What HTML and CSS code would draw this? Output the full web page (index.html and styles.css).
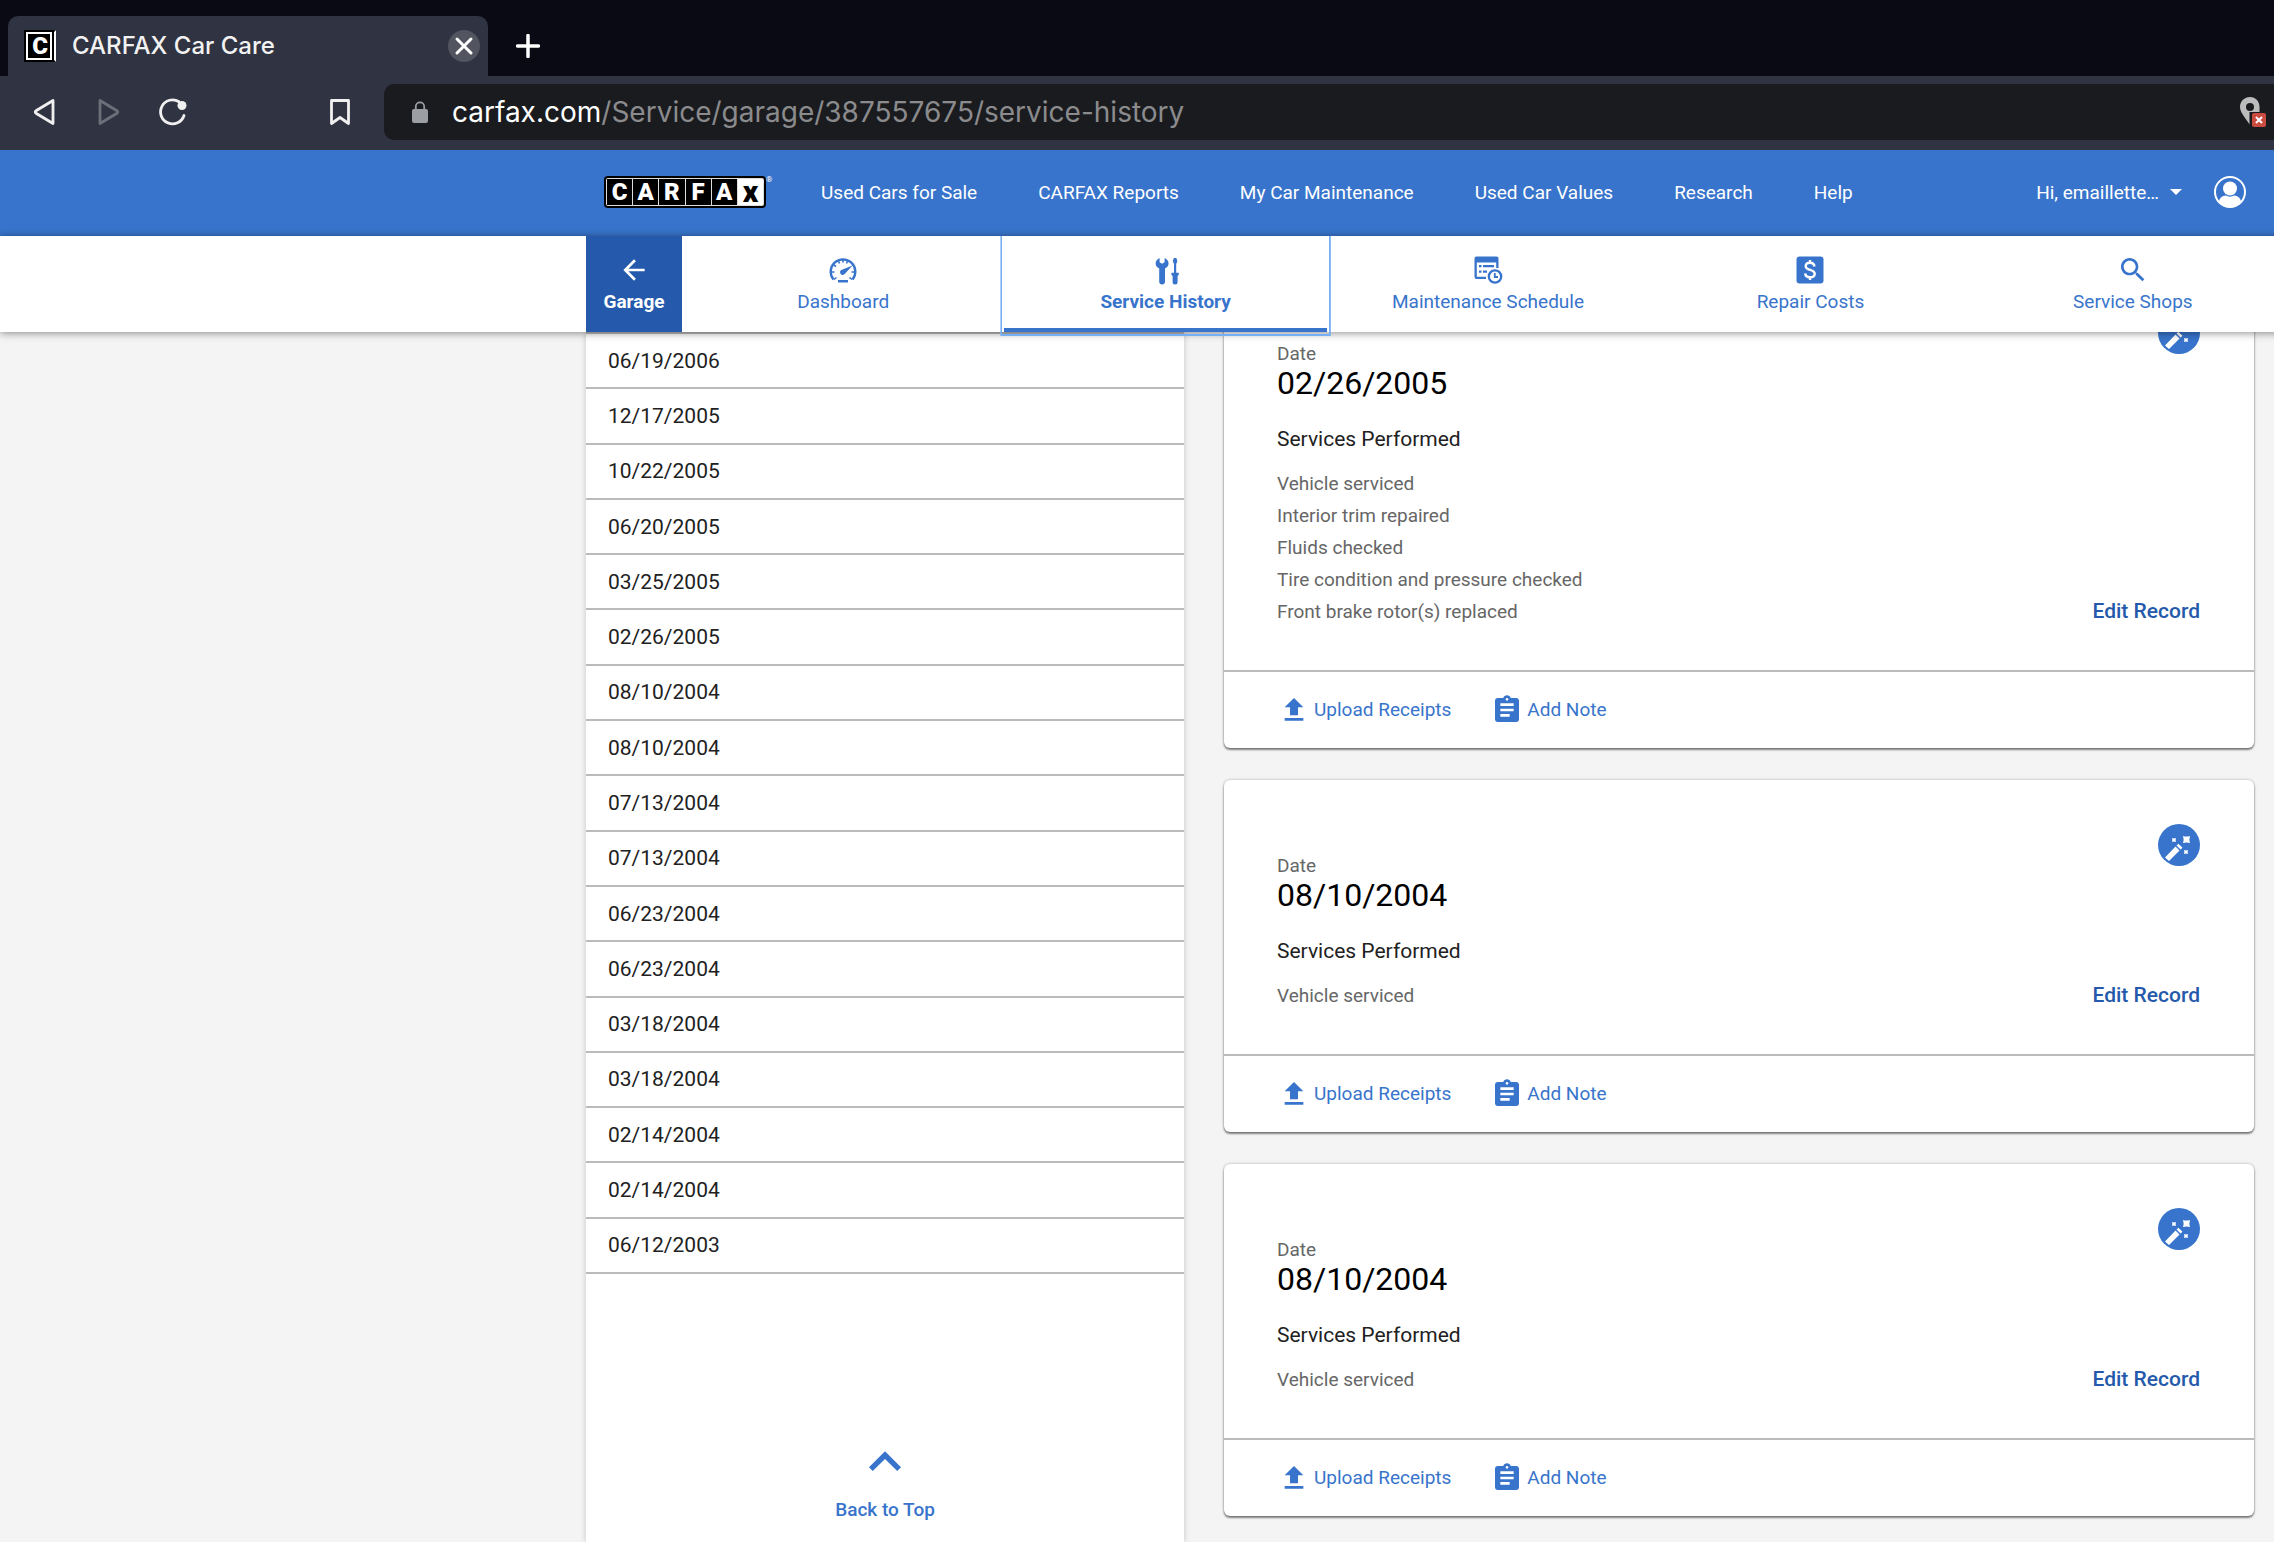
FILE: index.html
```html
<!DOCTYPE html>
<html lang="en">
<head>
<meta charset="utf-8">
<title>CARFAX Car Care</title>
<link rel="stylesheet" href="styles.css">
</head>
<body>
<svg class="sprite" aria-hidden="true">
  <symbol id="upload" viewBox="0 0 24 24"><path d="M9 16h6v-6h4l-7-7-7 7h4zm-4 2h14v2H5z"/></symbol>
  <symbol id="note" viewBox="0 0 24 24"><path d="M19 3h-4.180C14.400 1.840 13.300 1 12 1c-1.300 0-2.400.84-2.820 2H5c-1.100 0-2 .9-2 2v14c0 1.100.9 2 2 2h14c1.100 0 2-.9 2-2V5c0-1.100-.9-2-2-2zm-7 0c.55 0 1 .45 1 1s-.45 1-1 1-1-.45-1-1 .45-1 1-1zm2 14H7v-2h7v2zm3-4H7v-2h10v2zm0-4H7V7h10v2z"/></symbol>
  <symbol id="wand" viewBox="0 0 42 42">
    <circle cx="21" cy="21" r="21" fill="#3874cb"/>
    <path fill="#fff" d="M7 33.500 17.500 22.500 21.500 26.500 11 37zM18.500 21.500 20.300 19.700 24.500 23.800 22.600 25.500z"/>
    <path fill="#fff" d="M25 12q3.500 1.200 7 0q-1.200 3.500 0 7q-3.500-1.200-7 0q1.200-3.500 0-7zM14 14q2 .8 4 0q-.8 2 0 4q-2-.8-4 0q.8-2 0-4zM26 26q2 .8 4 0q-.8 2 0 4q-2-.8-4 0q.8-2 0-4z"/>
  </symbol>
</svg>

<div class="browser">
  <div class="tabstrip">
    <div class="tab">
      <span class="favicon">C</span>
      <span class="tab-title">CARFAX Car Care</span>
      <button class="tab-close" aria-label="Close tab"><svg viewBox="0 0 32 32" width="32" height="32"><path d="M9 9l14 14M23 9L9 23" stroke="#fff" stroke-width="3" stroke-linecap="round"/></svg></button>
    </div>
    <button class="tab-new" aria-label="New tab"><svg viewBox="0 0 24 24" width="24" height="24"><path d="M12 1.500v21M1.500 12h21" stroke="#fff" stroke-width="3.500" stroke-linecap="round"/></svg></button>
  </div>
  <div class="toolbar">
    <div class="tools">
      <button aria-label="Back"><svg viewBox="0 0 28 28" width="28" height="28" fill="none" stroke="#f0f0f0" stroke-width="2.800" stroke-linejoin="round"><path d="M22 2.500v23L5 15.200q-1.500-1.200 0-2.400z"/></svg></button>
      <button aria-label="Forward"><svg viewBox="0 0 28 28" width="28" height="28" fill="none" stroke="#6d6f78" stroke-width="2.800" stroke-linejoin="round"><path d="M5 2.500v23L22 15.200q1.500-1.200 0-2.400z"/></svg></button>
      <button aria-label="Reload"><svg viewBox="0 0 28 28" width="28" height="28"><path d="M25 17.500A12 12 0 1 1 20 3.700" fill="none" stroke="#f0f0f0" stroke-width="2.800" stroke-linecap="round"/><circle cx="23" cy="7.500" r="4.500" fill="#f0f0f0"/></svg></button>
      <button class="bookmark" aria-label="Bookmark"><svg viewBox="0 0 28 28" width="28" height="28" fill="none" stroke="#f0f0f0" stroke-width="2.800" stroke-linejoin="round"><path d="M5.500 2.500h17v23L14 19.500l-8.500 6z"/></svg></button>
    </div>
    <div class="address">
      <svg class="lock" viewBox="0 0 16 22" width="16" height="22"><rect y="8" width="16" height="14" rx="2" fill="#9b9ea3"/><path d="M3.800 9V5.500a4.200 4.200 0 0 1 8.400 0V9" fill="none" stroke="#9b9ea3" stroke-width="1.800"/></svg>
      <span class="url"><b>carfax.com</b>/Service/garage/387557675/service-history</span>
      <svg class="pin" viewBox="0 0 26 30" width="26" height="30"><path fill="#bcbcbc" fill-rule="evenodd" d="M10 0C4.500 0 0 4.300 0 9.800 0 16 5 20 9.500 27.500V15h10V9.800C19.500 4.300 15.500 0 10 0zm0 6a4 4 0 1 1 0 8 4 4 0 0 1 0-8z"/><rect x="12" y="16" width="14" height="14" rx="2" fill="#cb4b41"/><path d="M16 20l6 6M22 20l-6 6" stroke="#fff" stroke-width="2"/></svg>
    </div>
  </div>
</div>

<header class="site-header">
  <a class="logo" href="#" aria-label="CARFAX"><span class="plate"><i>C</i><i>A</i><i>R</i><i>F</i><i>A</i><i class="x">x</i></span><sup>®</sup></a>
  <nav class="site-nav">
    <a href="#">Used Cars for Sale</a><a href="#">CARFAX Reports</a><a href="#">My Car Maintenance</a><a href="#">Used Car Values</a><a href="#">Research</a><a href="#">Help</a>
  </nav>
  <button class="account"><span>Hi, emaillette…</span>
    <svg viewBox="0 0 12 6" width="12" height="6"><path d="M0 0h12L6 6z" fill="#fff"/></svg>
    <svg class="avatar" viewBox="0 0 32 32" width="32" height="32"><circle cx="16" cy="16" r="15" fill="none" stroke="#fff" stroke-width="2"/><circle cx="16" cy="12.500" r="7" fill="#fff"/><path d="M5 26c0-3.500 3-6.500 7-6.500 2 1.500 6 1.500 8 0 4 0 7 3 7 6.500A15 15 0 0 1 5 26z" fill="#fff"/></svg>
  </button>
</header>

<nav class="garage-nav">
  <a class="garage" href="#"><svg class="icon" viewBox="0 0 24 24"><path d="M20 11H7.830l5.590-5.590L12 4l-8 8 8 8 1.410-1.410L7.830 13H20z"/></svg>Garage</a>
  <a href="#"><svg class="icon" viewBox="0 0 32 32"><path d="M6.500 25.500A12.300 12.300 0 1 1 25.500 25.500" fill="none" stroke="currentColor" stroke-width="2.400"/><path d="M7 25.500l2.500-2M25 25.500l-2.500-2M4 18h3.500M28 18h-3.500M7 11l2 1.500M11.500 7l1 2.500M16 5.500v3M20.500 7l-1 2.500" stroke="currentColor" stroke-width="1.600"/><path d="M25.500 11.500l-7.600 8.300a2.700 2.700 0 1 1-3.600-3.900z"/><path d="M11 26h10v2.500H11z"/></svg>Dashboard</a>
  <a class="active" href="#"><svg class="icon" viewBox="0 0 32 32"><path d="M9.600 4v4.200l2.500 1.600 2.500-1.600V4C17 5.200 18.600 7 18.600 9.400c0 2.200-1.400 4-3.600 5v13.200a2.900 2.900 0 0 1-5.800 0V14.400c-2.200-1-3.600-2.800-3.600-5C5.600 7 7.200 5.200 9.600 4zM23.800 4h2.600l1 3.200-1.200 2.800v8.800h2.600v2l-1.200 1.200v6a2.500 2.500 0 0 1-5 0v-6l-1.200-1.200v-2H24V10l-1.200-2.800z"/></svg>Service History</a>
  <a href="#"><svg class="icon" viewBox="0 0 32 32"><path fill-rule="evenodd" d="M4.500 2.500h20a2 2 0 0 1 2 2V14h-2.300V8.500H4.800V22.700H14V25H4.500a2 2 0 0 1-2-2V4.500a2 2 0 0 1 2-2z"/><path d="M7 11h2.500v2.300H7zM11 11h11v2.300H11zM7 16.500h2.500v2.300H7zM11 16.500h4v2.300H11z"/><circle cx="23" cy="22.500" r="6.200" fill="none" stroke="currentColor" stroke-width="2.300"/><path d="M22.800 19v4h3.200" fill="none" stroke="currentColor" stroke-width="1.800"/></svg>Maintenance Schedule</a>
  <a href="#"><svg class="icon" viewBox="0 0 32 32"><rect x="2.500" y="2.500" width="27" height="27" rx="3"/><path d="M20.500 12.500c-.3-2.500-2-3.800-4.500-3.800s-4.300 1.300-4.300 3.500c0 4.800 9 2.500 9 7.600 0 2.200-1.900 3.500-4.600 3.500s-4.700-1.300-4.900-3.900M16 6v3M16 23v3" fill="none" stroke="#fff" stroke-width="2.400"/></svg>Repair Costs</a>
  <a href="#"><svg class="icon" viewBox="0 0 24 24"><path d="M15.500 14h-.79l-.28-.27C15.410 12.590 16 11.110 16 9.500 16 5.910 13.090 3 9.500 3S3 5.910 3 9.500 5.910 16 9.500 16c1.610 0 3.090-.59 4.230-1.570l.27.28v.79l5 4.990L20.490 19l-4.990-5zm-6 0C7.010 14 5 11.990 5 9.500S7.010 5 9.500 5 14 7.010 14 9.500 11.990 14 9.500 14z"/></svg>Service Shops</a>
</nav>

<main class="page">
  <aside class="history">
    <ul class="dates">
      <li>06/19/2006</li><li>12/17/2005</li><li>10/22/2005</li><li>06/20/2005</li><li>03/25/2005</li><li>02/26/2005</li><li>08/10/2004</li><li>08/10/2004</li><li>07/13/2004</li><li>07/13/2004</li><li>06/23/2004</li><li>06/23/2004</li><li>03/18/2004</li><li>03/18/2004</li><li>02/14/2004</li><li>02/14/2004</li><li>06/12/2003</li>
    </ul>
    <button class="to-top"><svg viewBox="0 0 24 24" width="64" height="64"><path d="M12 8l-6 6 1.410 1.410L12 10.830l4.590 4.580L18 14z"/></svg>Back to Top</button>
  </aside>

  <section class="records">
    <article class="card">
      <div class="card-body">
        <div class="details">
          <p class="label">Date</p>
          <h2>02/26/2005</h2>
          <h3>Services Performed</h3>
          <ul><li>Vehicle serviced</li><li>Interior trim repaired</li><li>Fluids checked</li><li>Tire condition and pressure checked</li><li>Front brake rotor(s) replaced</li></ul>
        </div>
        <div class="side"><svg width="42" height="42"><use href="#wand"/></svg><a href="#">Edit Record</a></div>
      </div>
      <footer><button><svg class="icon"><use href="#upload"/></svg>Upload Receipts</button><button><svg class="icon"><use href="#note"/></svg>Add Note</button></footer>
    </article>
    <article class="card">
      <div class="card-body">
        <div class="details">
          <p class="label">Date</p>
          <h2>08/10/2004</h2>
          <h3>Services Performed</h3>
          <ul><li>Vehicle serviced</li></ul>
        </div>
        <div class="side"><svg width="42" height="42"><use href="#wand"/></svg><a href="#">Edit Record</a></div>
      </div>
      <footer><button><svg class="icon"><use href="#upload"/></svg>Upload Receipts</button><button><svg class="icon"><use href="#note"/></svg>Add Note</button></footer>
    </article>
    <article class="card">
      <div class="card-body">
        <div class="details">
          <p class="label">Date</p>
          <h2>08/10/2004</h2>
          <h3>Services Performed</h3>
          <ul><li>Vehicle serviced</li></ul>
        </div>
        <div class="side"><svg width="42" height="42"><use href="#wand"/></svg><a href="#">Edit Record</a></div>
      </div>
      <footer><button><svg class="icon"><use href="#upload"/></svg>Upload Receipts</button><button><svg class="icon"><use href="#note"/></svg>Add Note</button></footer>
    </article>
  </section>
</main>
</body>
</html>
```

FILE: styles.css
```css
:root {
  --blue: #3874cb;
  --blue-dark: #2459ab;
  --line: #bbb;
  --gutter: 586px;
}

* { box-sizing: border-box; }

html { overflow-x: hidden; }

body {
  margin: 0;
  min-height: 100vh;
  display: flex;
  flex-direction: column;
  background: #f4f4f4;
  color: #212121;
  font-family: Roboto, "Liberation Sans", sans-serif;
  font-size: 19px;
  overflow-x: hidden;
}

button {
  padding: 0;
  border: 0;
  background: none;
  font: inherit;
  color: inherit;
  cursor: pointer;
}

a { color: inherit; text-decoration: none; }
ul { margin: 0; padding: 0; list-style: none; }
p, h2, h3 { margin: 0; font-weight: 400; }
svg { display: block; flex: none; }
.sprite { position: absolute; width: 0; height: 0; }
.icon { width: 32px; height: 32px; fill: currentColor; }

/* Browser window */
.browser { font-family: Inter, "Liberation Sans", sans-serif; background: #303341; }

.tabstrip {
  display: flex;
  align-items: center;
  height: 76px;
  padding: 16px 8px 0;
  background: #0a0a14;
}

.tab {
  display: flex;
  align-items: center;
  gap: 16px;
  width: 480px;
  height: 60px;
  padding: 0 8px 0 16px;
  border-radius: 10px 10px 0 0;
  background: #303341;
}

.favicon {
  width: 32px;
  height: 32px;
  border: 2px solid #000;
  border-right-color: #fff;
  background: #000;
  box-shadow: inset -2px 0 0 #000, inset 0 0 0 2px #fff, inset -4px 0 0 #fff;
  color: #fff;
  font: 900 24px/28px Roboto, sans-serif;
  text-align: center;
}

.tab-title { flex: 1; color: #f2f2f2; font-size: 24px; line-height: 28px; font-weight: 500; }
.tab-close { border-radius: 50%; background: #52545f; }
.tab-new { margin-left: 28px; }

.toolbar { display: flex; height: 74px; padding: 8px 0 10px 31px; }
.tools { display: flex; align-items: center; gap: 36px; width: 353px; }
.bookmark { margin-left: auto; margin-right: 30px; }

.address {
  flex: 1;
  display: flex;
  align-items: center;
  gap: 24px;
  padding: 0 8px 0 28px;
  border-radius: 10px 0 0 10px;
  background: #1a1b1f;
}

.url { flex: 1; color: #8b8b8d; font-size: 28px; }
.url b { color: #fff; font-weight: 400; }

/* Site header */
.site-header {
  display: flex;
  align-items: center;
  height: 86px;
  padding: 0 28px 2px 604px;
  background: var(--blue);
  color: #fff;
}

.logo { display: flex; align-items: flex-start; width: 217px; }
.logo sup { font-size: 8px; line-height: 8px; }

.plate {
  display: flex;
  width: 162px;
  height: 32px;
  padding: 1px;
  gap: 1px;
  border: 2px solid #000;
  border-radius: 4px;
  background: #ddd;
}

.plate i {
  flex: 1 1 0;
  background: #000;
  font: 900 24px/26px Roboto, sans-serif;
  text-align: center;
}

.plate .x { background: #fff; color: #000; font-size: 30px; line-height: 26px; }

.site-nav { display: flex; gap: 61px; flex: 1; }
.account { display: flex; align-items: center; gap: 11px; }
.avatar { margin-left: 21px; }

/* Garage navigation, wider than the viewport by the scroll gutter */
.garage-nav {
  position: relative;
  z-index: 2;
  display: flex;
  height: 96px;
  margin-right: -20px;
  padding-left: var(--gutter);
  background: #fff;
  color: var(--blue);
  box-shadow: 0 1px 8px rgba(0, 0, 0, .45);
}

.garage-nav a {
  flex: 1;
  display: flex;
  flex-direction: column;
  align-items: center;
  padding-top: 18px;
  line-height: 32px;
}

.garage-nav .garage {
  flex: 0 0 96px;
  background: var(--blue-dark);
  color: #fff;
  font-weight: 700;
}

.garage-nav .active {
  border-bottom: 4px solid var(--blue);
  outline: 2px solid #77aff5;
  outline-offset: 2px;
  clip-path: inset(0 -4px -4px -4px);
  font-weight: 700;
}

/* Service history */
.page { flex: 1; display: flex; gap: 40px; padding: 0 20px 0 var(--gutter); }

.history {
  flex: 0 1 598px;
  display: flex;
  flex-direction: column;
  align-items: center;
  background: #fff;
  box-shadow: 0 0 6px rgba(0, 0, 0, .2);
}

.dates {
  display: grid;
  grid-auto-rows: 1fr;
  width: 100%;
  height: 942px;
  border-top: 2px solid var(--line);
  font-size: 21px;
}

.dates li {
  display: flex;
  align-items: center;
  padding: 0 22px;
  border-bottom: 2px solid var(--line);
}

.to-top {
  display: flex;
  flex-direction: column;
  align-items: center;
  margin-top: 156px;
  color: var(--blue);
  font-weight: 500;
  line-height: 32px;
}

.to-top svg { fill: currentColor; }

/* Records start scrolled part-way under the navigation */
.records {
  flex: 1;
  display: flex;
  flex-direction: column;
  gap: 32px;
  margin-top: -64px;
}

.card {
  border-radius: 6px;
  background: #fff;
  box-shadow: 0 2px 2px rgba(0, 0, 0, .45), 0 0 3px rgba(0, 0, 0, .3);
}

.card-body {
  display: flex;
  justify-content: space-between;
  padding: 44px 54px 42px 53px;
  border-bottom: 2px solid var(--line);
}

.details { padding-top: 30px; color: #666; }
.label { line-height: 24px; }
.details h2 { color: #000; font-size: 32px; line-height: 34px; }
.details h3 { margin: 25px 0 15px; color: #212121; font-size: 21px; line-height: 28px; }
.details li { line-height: 32px; }

.side {
  display: flex;
  flex-direction: column;
  align-items: flex-end;
  justify-content: space-between;
  color: var(--blue-dark);
  font-size: 21px;
  font-weight: 500;
  line-height: 30px;
}

.side a { padding-bottom: 2px; }

.card footer { display: flex; gap: 40px; height: 76px; padding-left: 54px; color: var(--blue); }
.card footer button { display: flex; align-items: center; gap: 4px; line-height: 24px; }
```
